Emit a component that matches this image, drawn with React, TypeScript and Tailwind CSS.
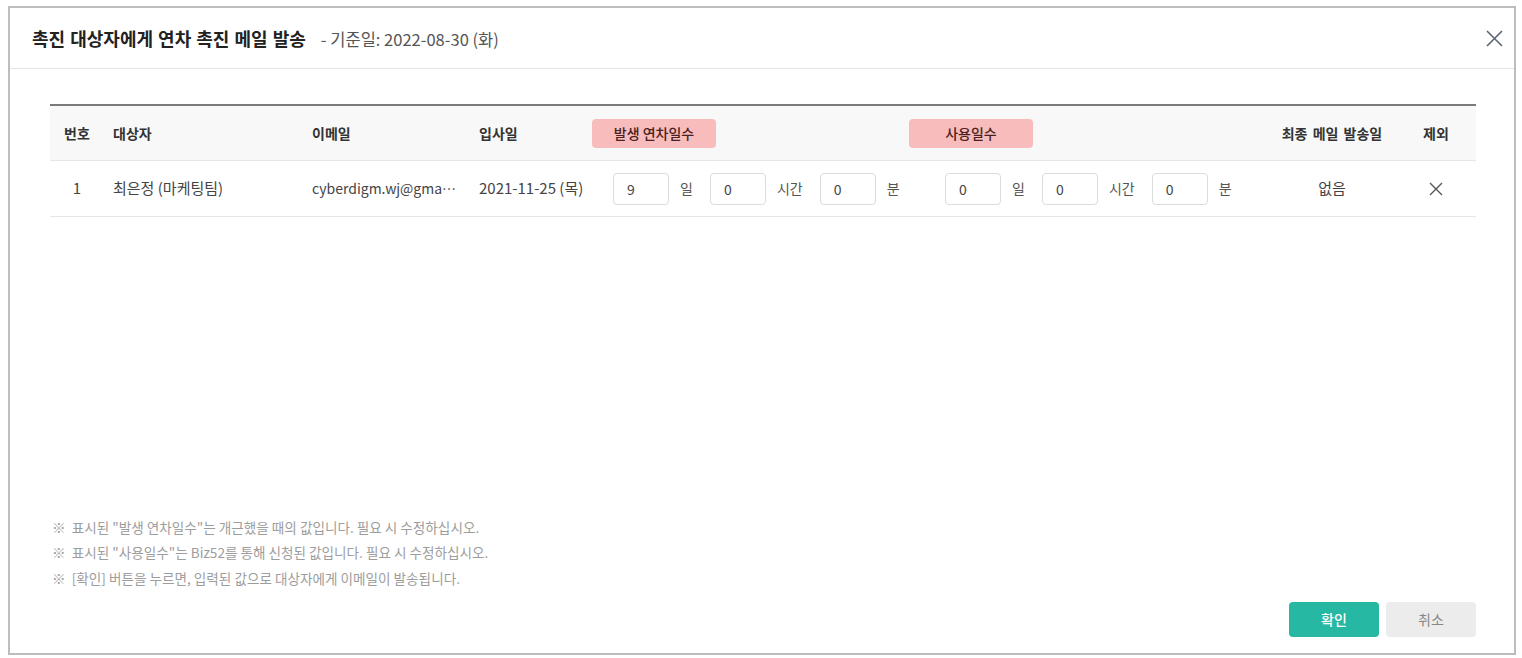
import { useState } from "react";

const font = "font-['Noto_Sans_CJK_KR','Noto_Sans',sans-serif]";

function NumBox({ value, onChange }: { value: string; onChange: (v: string) => void }) {
  return (
    <input
      value={value}
      onChange={(e) => onChange(e.target.value)}
      className="h-[32px] w-[56px] rounded-[4px] border border-[#dcdcdc] bg-white pl-[13px] text-[14px] text-[#444] outline-none focus:border-[#2bb8a3]"
    />
  );
}

function DurationInputs({ values, onChange }: { values: string[]; onChange: (i: number, v: string) => void }) {
  const units = ["일", "시간", "분"];
  return (
    <div className="flex items-center">
      {units.map((unit, i) => (
        <div key={unit} className="flex items-center">
          <NumBox value={values[i]} onChange={(v) => onChange(i, v)} />
          <span className={`ml-[11px] text-[14px] text-[#555] ${i < 2 ? "mr-[17px]" : ""}`}>{unit}</span>
        </div>
      ))}
    </div>
  );
}

function Badge({ children }: { children: React.ReactNode }) {
  return (
    <span className="inline-flex h-[29px] w-[124px] items-center justify-center rounded-[4px] bg-[#f8bcbc] text-[14px] font-medium text-[#4a2020]">
      {children}
    </span>
  );
}

export default function App() {
  const [granted, setGranted] = useState(["9", "0", "0"]);
  const [used, setUsed] = useState(["0", "0", "0"]);

  return (
    <div className={`h-[658px] w-[1522px] overflow-hidden bg-white pl-[8px] pt-[6px] ${font}`}>
      <div className="flex h-[649px] w-[1508px] flex-col border-2 border-[#bdbdbd] bg-white">
        <div className="flex h-[61px] shrink-0 items-center justify-between border-b border-[#e6e6e6] pl-[22px] pr-[8px]">
          <div className="flex items-baseline">
            <h1 className="text-[18px] font-bold text-[#222] [word-spacing:1px]">촉진 대상자에게 연차 촉진 메일 발송</h1>
            <span className="ml-[15px] text-[16.5px] text-[#555]">- 기준일: 2022-08-30 (화)</span>
          </div>
          <button className="flex h-[24px] w-[24px] items-center justify-center text-[#5b6573]">
            <svg width="17" height="17" viewBox="0 0 17 17" fill="none" stroke="currentColor" strokeWidth="1.6">
              <path d="M1 1L16 16M16 1L1 16" />
            </svg>
          </button>
        </div>

        <div className="flex flex-1 flex-col pl-[40px] pr-[38px]">
          <div className="mt-[35px] border-t-2 border-[#7a7a7a]">
            <div className="flex h-[55px] items-center border-b border-[#e6e6e6] bg-[#f8f8f8] text-[14px] font-bold text-[#333]">
              <div className="w-[54px] text-center">번호</div>
              <div className="w-[199px] pl-[9px]">대상자</div>
              <div className="w-[167px] pl-[9px]">이메일</div>
              <div className="w-[122px] pl-[9px]">입사일</div>
              <div className="w-[317px]">
                <Badge>발생 연차일수</Badge>
              </div>
              <div className="w-[359px]">
                <Badge>사용일수</Badge>
              </div>
              <div className="w-[128px] text-center [word-spacing:2px]">최종 메일 발송일</div>
              <div className="w-[80px] text-center">제외</div>
            </div>
            <div className="flex h-[56px] items-center border-b border-[#e6e6e6] text-[15px] text-[#444]">
              <div className="w-[54px] text-center">1</div>
              <div className="w-[199px] pl-[9px]">최은정 (마케팅팀)</div>
              <div className="w-[167px] pl-[9px]">
                <div className="w-[145px] truncate text-[14px]">cyberdigm.wj@gmail.com</div>
              </div>
              <div className="w-[122px] whitespace-nowrap pl-[9px]">2021-11-25 (목)</div>
              <div className="w-[317px] pl-[21px]">
                <DurationInputs
                  values={granted}
                  onChange={(i, v) => setGranted((prev) => prev.map((p, j) => (j === i ? v : p)))}
                />
              </div>
              <div className="w-[359px] pl-[36px]">
                <DurationInputs
                  values={used}
                  onChange={(i, v) => setUsed((prev) => prev.map((p, j) => (j === i ? v : p)))}
                />
              </div>
              <div className="w-[128px] text-center">없음</div>
              <div className="flex w-[80px] justify-center">
                <button className="text-[#555]">
                  <svg width="14" height="14" viewBox="0 0 14 14" fill="none" stroke="currentColor" strokeWidth="1.4">
                    <path d="M1 1L13 13M13 1L1 13" />
                  </svg>
                </button>
              </div>
            </div>
          </div>

          <div className="mt-auto pl-[2px] text-[13.6px] leading-[25.5px] text-[#9d9d9d]">
            <p>※&nbsp; 표시된 "발생 연차일수"는 개근했을 때의 값입니다. 필요 시 수정하십시오.</p>
            <p>※&nbsp; 표시된 "사용일수"는 Biz52를 통해 신청된 값입니다. 필요 시 수정하십시오.</p>
            <p>※&nbsp; [확인] 버튼을 누르면, 입력된 값으로 대상자에게 이메일이 발송됩니다.</p>
          </div>

          <div className="mb-[16px] mt-[11px] flex justify-end gap-[7px]">
            <button className="h-[35px] w-[90px] rounded-[4px] bg-[#26b8a2] text-[14px] font-medium text-white">확인</button>
            <button className="h-[35px] w-[90px] rounded-[4px] bg-[#ececec] text-[14px] text-[#888]">취소</button>
          </div>
        </div>
      </div>
    </div>
  );
}
